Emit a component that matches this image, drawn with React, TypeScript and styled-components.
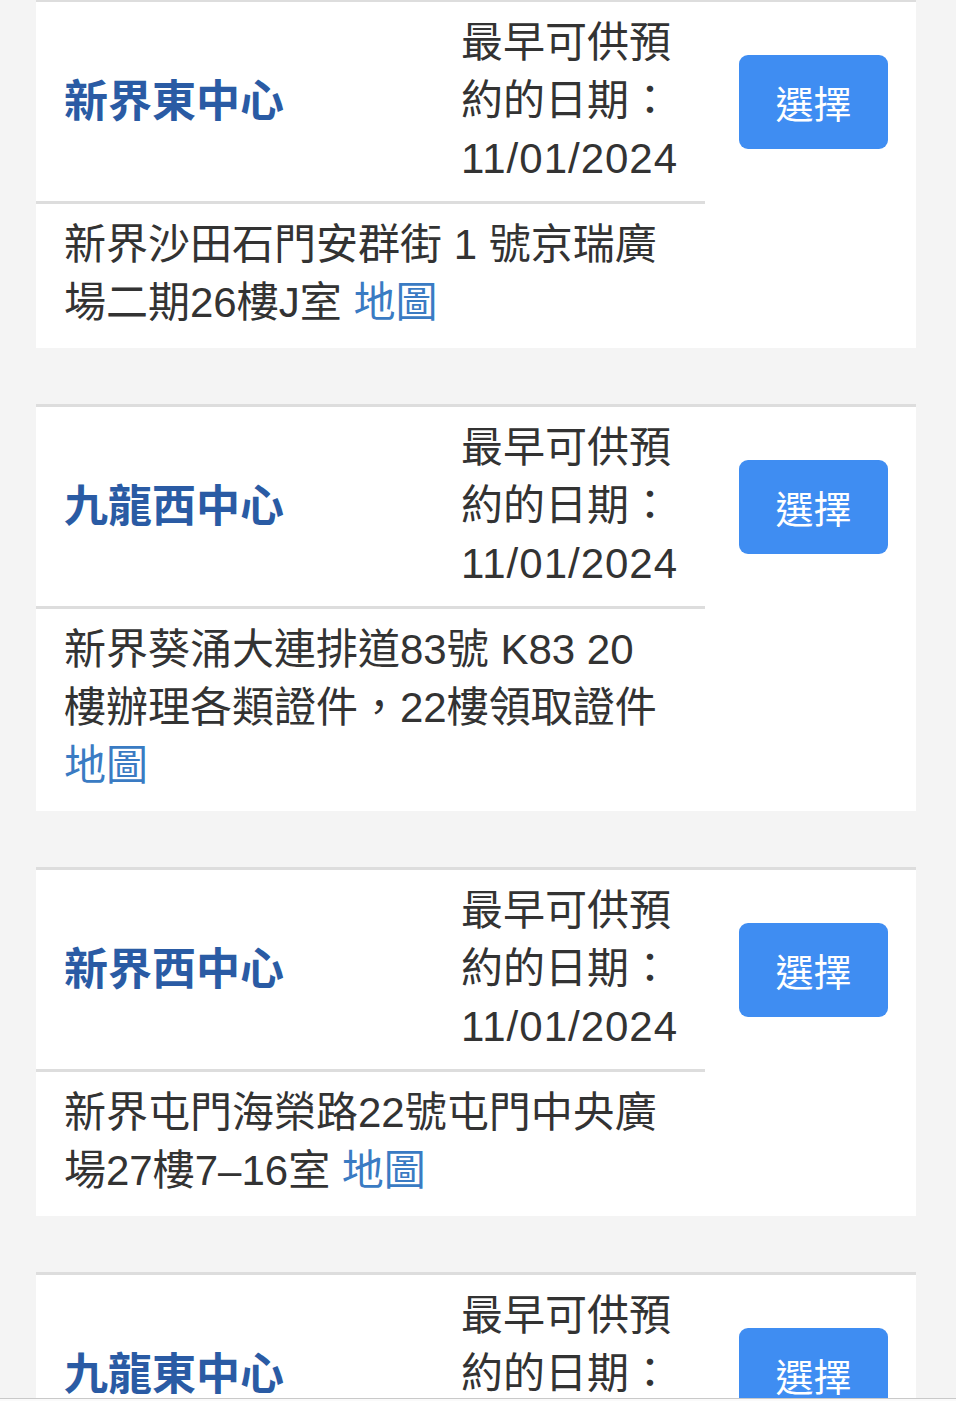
import React from 'react';
import styled, { createGlobalStyle } from 'styled-components';

const GlobalStyle = createGlobalStyle`
  html, body {
    margin: 0;
    padding: 0;
    background: #f4f4f4;
  }

  body {
    font-family: 'Liberation Sans', 'Noto Sans CJK TC', sans-serif;
    color: #333333;
  }
`;

interface Centre {
  name: string;
  date: string;
  address: string;
}

const centres: Centre[] = [
  {
    name: '新界東中心',
    date: '11/01/2024',
    address: '新界沙田石門安群街 1 號京瑞廣場二期26樓J室',
  },
  {
    name: '九龍西中心',
    date: '11/01/2024',
    address: '新界葵涌大連排道83號 K83 20樓辦理各類證件，22樓領取證件',
  },
  {
    name: '新界西中心',
    date: '11/01/2024',
    address: '新界屯門海榮路22號屯門中央廣場27樓7–16室',
  },
  {
    name: '九龍東中心',
    date: '11/01/2024',
    address: '九龍觀塘開源道',
  },
];

const Wrapper = styled.div`
  display: flex;
  flex-direction: column;
  gap: 56px;
  margin: -1px 40px 0 36px;
  padding-bottom: 60px;
`;

const Card = styled.div`
  display: grid;
  grid-template-columns: 397px 272px 1fr;
  background: #ffffff;
  border-top: 3px solid #dddddd;
`;

const NameCell = styled.div`
  display: flex;
  align-items: center;
  padding: 0 0 0 28px;
`;

const Name = styled.h2`
  margin: 0;
  font-size: 44px;
  line-height: 58px;
  font-weight: bold;
  color: #2a5ba4;
`;

const DateCell = styled.div`
  padding: 12px 28px 13px;
  font-size: 42px;
  line-height: 58px;
  color: #333333;
`;

const DateValue = styled.span`
  letter-spacing: 1px;
`;

const ButtonCell = styled.div`
  display: flex;
  align-items: center;
  padding-left: 34px;
`;

const SelectButton = styled.button`
  width: 149px;
  height: 94px;
  border: none;
  border-radius: 9px;
  background: #3f8df2;
  color: #ffffff;
  font-family: 'Liberation Sans', 'Noto Sans CJK TC', sans-serif;
  font-size: 38px;
  padding: 0;
  cursor: pointer;
`;

const AddressCell = styled.div`
  grid-column: 1 / 3;
  border-top: 3px solid #dddddd;
  padding: 12px 40px 16px 28px;
  font-size: 42px;
  line-height: 58px;
  color: #333333;
`;

const MapLink = styled.a`
  color: #3a7bc3;
  text-decoration: none;
`;

const Footer = styled.div`
  position: fixed;
  left: 0;
  right: 0;
  bottom: 0;
  height: 2px;
  background: #fafafa;
  border-top: 1px solid #c9c9c9;
`;

const CentreCard: React.FC<{ centre: Centre }> = ({ centre }) => (
  <Card>
    <NameCell>
      <Name>{centre.name}</Name>
    </NameCell>
    <DateCell>
      最早可供預約的日期：
      <br />
      <DateValue>{centre.date}</DateValue>
    </DateCell>
    <ButtonCell>
      <SelectButton>選擇</SelectButton>
    </ButtonCell>
    <AddressCell>
      {centre.address} <MapLink href="#">地圖</MapLink>
    </AddressCell>
  </Card>
);

const App: React.FC = () => (
  <>
    <GlobalStyle />
    <Wrapper>
      {centres.map(centre => (
        <CentreCard key={centre.name} centre={centre} />
      ))}
    </Wrapper>
    <Footer />
  </>
);

export default App;
